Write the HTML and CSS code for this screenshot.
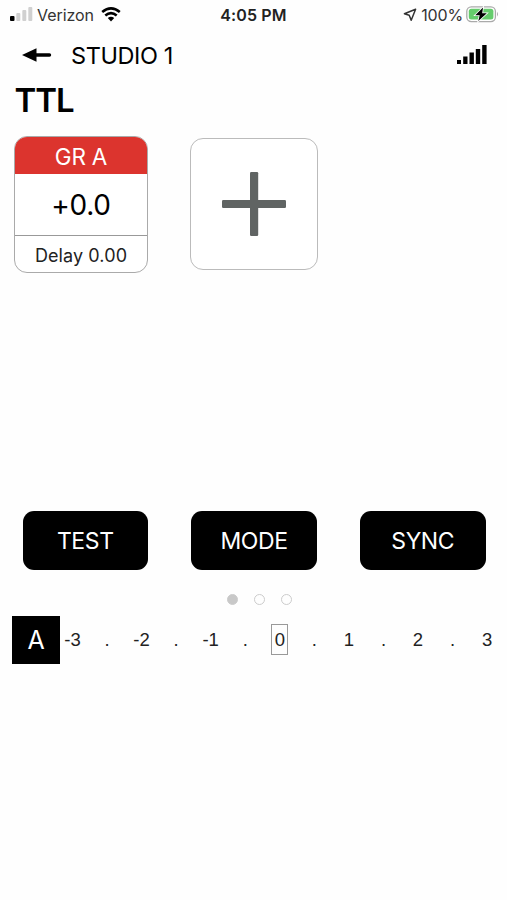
FILE: index.html
```html
<!DOCTYPE html>
<html lang="en">
<head>
<meta charset="utf-8">
<title>Studio 1</title>
<link rel="stylesheet" href="styles.css">
</head>
<body>
<div class="status">
  <div class="status-left">
    <svg width="23" height="16" viewBox="0 0 23 16"><rect x="0" y="10" width="4.5" height="5" rx="1" fill="#000"/><g fill="#d0d0d0"><rect x="6.3" y="7" width="4" height="8" rx="1"/><rect x="12.3" y="4" width="4" height="11" rx="1"/><rect x="18.3" y="1" width="4" height="14" rx="1"/></g></svg>
    <span class="carrier">Verizon</span>
    <svg class="wifi" width="20" height="16" viewBox="0 0 20 16" fill="none" stroke="#000" stroke-width="2.6"><path d="M1.2 6Q10-1.4 18.8 6"/><path d="M4.3 9.6Q10 4.8 15.7 9.6"/><path d="M6.8 12Q10 9.4 13.2 12L10 15.4Z" fill="#000" stroke="none"/></svg>
  </div>
  <div class="clock">4:05 PM</div>
  <div class="status-right">
    <svg width="14" height="14" viewBox="0 0 14 14" fill="none" stroke="#333" stroke-width="1.5" stroke-linejoin="round"><path d="M12.6 1.2L1.4 5.8L6.2 7.2L8.2 12.3Z"/></svg>
    <span class="percent">100%</span>
    <svg width="33" height="17" viewBox="0 0 33 17"><rect x=".8" y=".8" width="28.6" height="14.8" rx="4.5" fill="#fff" stroke="#aaa" stroke-width="1.3"/><rect x="2.8" y="2.8" width="24.6" height="10.8" rx="2.5" fill="#65cc6c"/><path d="M31 5.8Q33 8.2 31 10.6Z" fill="#aaa"/><path d="M17 1.5L9.2 9.2H13.7L12.3 15L20.8 7.3H16.2Z" fill="#000" stroke="#fff" stroke-width="1.6" paint-order="stroke"/></svg>
  </div>
</div>
<header class="nav">
  <svg width="30" height="16" viewBox="0 0 30 16"><path d="M0 8L14.5 1.2V14.8Z"/><path d="M13 8H27.5" stroke="#000" stroke-width="3.4" stroke-linecap="round"/></svg>
  <h1 class="studio">STUDIO 1</h1>
  <svg class="signal" width="30" height="19" viewBox="0 0 30 19"><path d="M0 15H4V19H0ZM6.2 11.5H10.5V19H6.2ZM12.5 7.5H16.9V19H12.5ZM18.8 4H23.2V19H18.8ZM25.2 0H29.6V19H25.2Z"/></svg>
</header>
<h2 class="mode">TTL</h2>
<main class="groups">
  <section class="group">
    <div class="group-name"><span>GR A</span></div>
    <div class="group-value"><span>+0.0</span></div>
    <div class="group-delay"><span>Delay 0.00</span></div>
  </section>
  <button class="add" aria-label="Add group"><svg width="64" height="64" viewBox="0 0 64 64" fill="#606463"><rect x="28" width="8.2" height="64" rx="1.2"/><rect y="28" width="64" height="8" rx="1.2"/></svg></button>
</main>
<div class="actions">
  <button>TEST</button><button>MODE</button><button>SYNC</button>
</div>
<div class="pager"><i class="on"></i><i></i><i></i></div>
<div class="exposure">
  <div class="badge">A</div>
  <div class="scale"><span>-3</span><span>.</span><span>-2</span><span>.</span><span>-1</span><span>.</span><span><b>0</b></span><span>.</span><span>1</span><span>.</span><span>2</span><span>.</span><span>3</span></div>
</div>
</body>
</html>
```
FILE: styles.css
```css
* { box-sizing: border-box; }
body { margin: 0; width: 507px; height: 900px; background: #fefefe; color: #000; font-family: Inter, "Liberation Sans", sans-serif; overflow: hidden; }
svg { display: block; flex: none; }
h1, h2 { margin: 0; }
button { font: inherit; padding: 0; border: 0; }
.status { display: grid; grid-template-columns: 1fr auto 1fr; align-items: center; height: 30px; padding: 0 8px 0 10px; font-size: 16px; color: #333; white-space: nowrap; }
.status-left, .status-right { display: flex; align-items: center; }
.status-left { padding-bottom: 2px; }
.carrier { margin-left: 4px; padding-top: 2px; letter-spacing: -.05px; }
.wifi { margin-left: 7px; }
.clock { margin-right: 2px; font-weight: 600; color: #222; letter-spacing: .15px; }
.status-right { justify-content: flex-end; padding-bottom: 1px; }
.percent { margin: 0 3px 0 4px; letter-spacing: -.15px; }
.nav { display: flex; align-items: center; height: 50px; padding: 0 19px 0 22px; }
.studio { margin-left: 19px; font-size: 23.5px; font-weight: 400; letter-spacing: -.4px; }
.signal { margin: 0 1px 1px auto; }
.mode { height: 56px; padding-left: 14.5px; font-size: 33px; line-height: 40px; font-weight: 600; letter-spacing: -1px; }
.groups { display: flex; gap: 42px; height: 375px; padding-left: 14px; align-items: flex-start; }
.group { width: 134px; height: 137px; border: 1.5px solid #aaa; border-radius: 13px; overflow: hidden; background: #fff; text-align: center; }
.group-name { height: 37px; line-height: 39px; background: #dc342e; color: #fff; font-size: 22.5px; letter-spacing: -.2px; }
.group-value { height: 62px; line-height: 63px; border-bottom: 1px solid #999; font-size: 28px; letter-spacing: -.3px; }
.group-delay { height: 36px; line-height: 39px; font-size: 18px; letter-spacing: .1px; color: #222; }
.add { display: grid; place-items: center; width: 128px; height: 132px; margin-top: 2px; padding-bottom: 1px; border: 1.5px solid #bbb; border-radius: 13px; background: #fff; }
.actions { display: flex; justify-content: space-between; padding: 0 21.5px 0 22.5px; }
.actions button { width: 125.5px; height: 59px; border-radius: 11px; background: #000; color: #fff; font-size: 23px; letter-spacing: -.4px; }
.pager { display: flex; justify-content: center; gap: 16px; height: 46px; padding: 24px 0 0 11px; }
.pager i { width: 11px; height: 11px; border: 1.5px solid #ccc; border-radius: 50%; }
.pager .on { background: #c8c8c8; }
.exposure { display: flex; align-items: center; padding-left: 12px; }
.badge { width: 48px; height: 48px; background: #000; color: #fff; font-size: 25px; line-height: 49px; text-align: center; }
.scale { display: grid; grid-template-columns: repeat(13, 1fr); width: 449.2px; margin-left: -4.8px; flex: none; font: 18.5px/32px "Liberation Sans", sans-serif; text-align: center; color: #222; }
.scale b { display: block; width: 17px; height: 31px; margin: 0 auto; border: 1px solid #999; font-weight: 400; line-height: 30px; }
```
